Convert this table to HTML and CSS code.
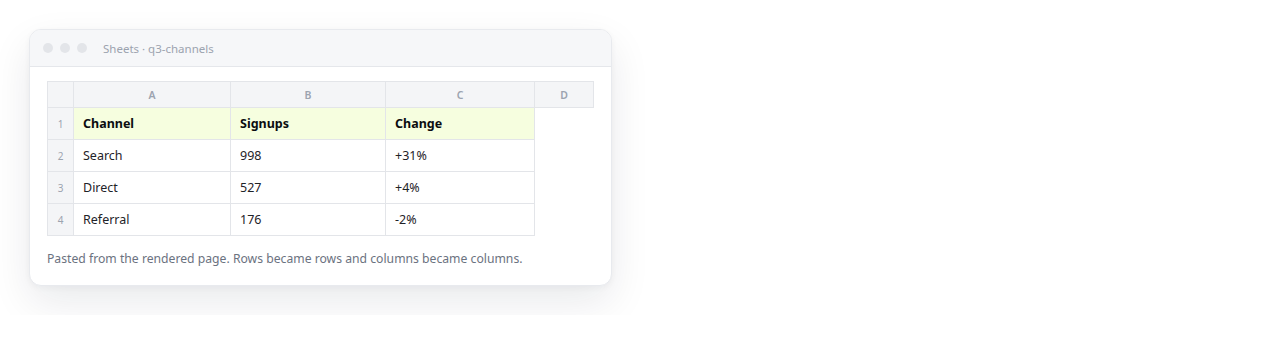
FILE: index.html
```html
<!DOCTYPE html>
<html lang="en">
<head>
<meta charset="utf-8">
<title>Sheets · q3-channels</title>
<link rel="stylesheet" href="styles.css">
</head>
<body>
<div class="window">
  <div class="titlebar">
    <span class="dot"></span><span class="dot"></span><span class="dot"></span>
    <span class="title">Sheets · q3-channels</span>
  </div>
  <div class="content">
    <table class="sheet">
      <colgroup>
        <col class="c-num"><col class="c-a"><col class="c-b"><col class="c-c"><col class="c-d">
      </colgroup>
      <thead>
        <tr><th class="corner"></th><th>A</th><th>B</th><th>C</th><th>D</th></tr>
      </thead>
      <tbody>
        <tr class="hl"><td class="num">1</td><td class="bold">Channel</td><td class="bold">Signups</td><td class="bold">Change</td><td class="empty"></td></tr>
        <tr><td class="num">2</td><td>Search</td><td>998</td><td>+31%</td><td class="empty"></td></tr>
        <tr><td class="num">3</td><td>Direct</td><td>527</td><td>+4%</td><td class="empty"></td></tr>
        <tr><td class="num">4</td><td>Referral</td><td>176</td><td>-2%</td><td class="empty"></td></tr>
      </tbody>
    </table>
    <p class="caption">Pasted from the rendered page. Rows became rows and columns became columns.</p>
  </div>
</div>
</body>
</html>
```
FILE: styles.css
```css
html, body {
  margin: 0;
  padding: 0;
  background: #ffffff;
}
body {
  font-family: "Noto Sans", "Open Sans", sans-serif;
  padding: 29px;
}
.window {
  width: 583px;
  box-sizing: border-box;
  background: #ffffff;
  border: 1px solid #e8eaee;
  border-radius: 12px;
  box-shadow: 0 16px 40px rgba(15, 23, 42, 0.09), 0 2px 6px rgba(15, 23, 42, 0.04);
  overflow: hidden;
}
.titlebar {
  height: 37px;
  box-sizing: border-box;
  background: #f6f7f9;
  border-bottom: 1px solid #e5e7eb;
  display: flex;
  align-items: center;
  padding-left: 13px;
  gap: 7px;
}
.dot {
  width: 10px;
  height: 10px;
  border-radius: 50%;
  background: #e3e5e9;
}
.title {
  margin-left: 9px;
  font-size: 11.5px;
  color: #9ca3af;
}
.content {
  padding: 14px 17px 18px 17px;
}
.sheet {
  width: 546px;
  border-collapse: collapse;
  table-layout: fixed;
  font-size: 12.5px;
}
.c-num { width: 26px; }
.c-a { width: 157px; }
.c-b { width: 155px; }
.c-c { width: 149px; }
.c-d { width: 59px; }
.sheet th {
  height: 25px;
  background: #f4f5f7;
  border: 1px solid #e3e5e9;
  color: #9ca3af;
  font-size: 10.5px;
  font-weight: 600;
  text-align: center;
  padding: 0;
}
.sheet td {
  height: 32px;
  border: 1px solid #e3e5e9;
  padding: 0 0 0 9px;
  color: #1f2328;
  box-sizing: border-box;
}
.sheet td.num {
  background: #f4f5f7;
  color: #9ca3af;
  font-size: 10px;
  text-align: center;
  padding: 0;
}
.sheet tr.hl td:not(.num):not(.empty) {
  background: #f6fedf;
}
.sheet td.bold {
  font-weight: 700;
  color: #0b0d10;
}
.sheet td.empty {
  border: none;
  background: transparent;
}
.caption {
  margin: 14px 0 0 0;
  font-size: 12.2px;
  color: #6b7280;
}
```
